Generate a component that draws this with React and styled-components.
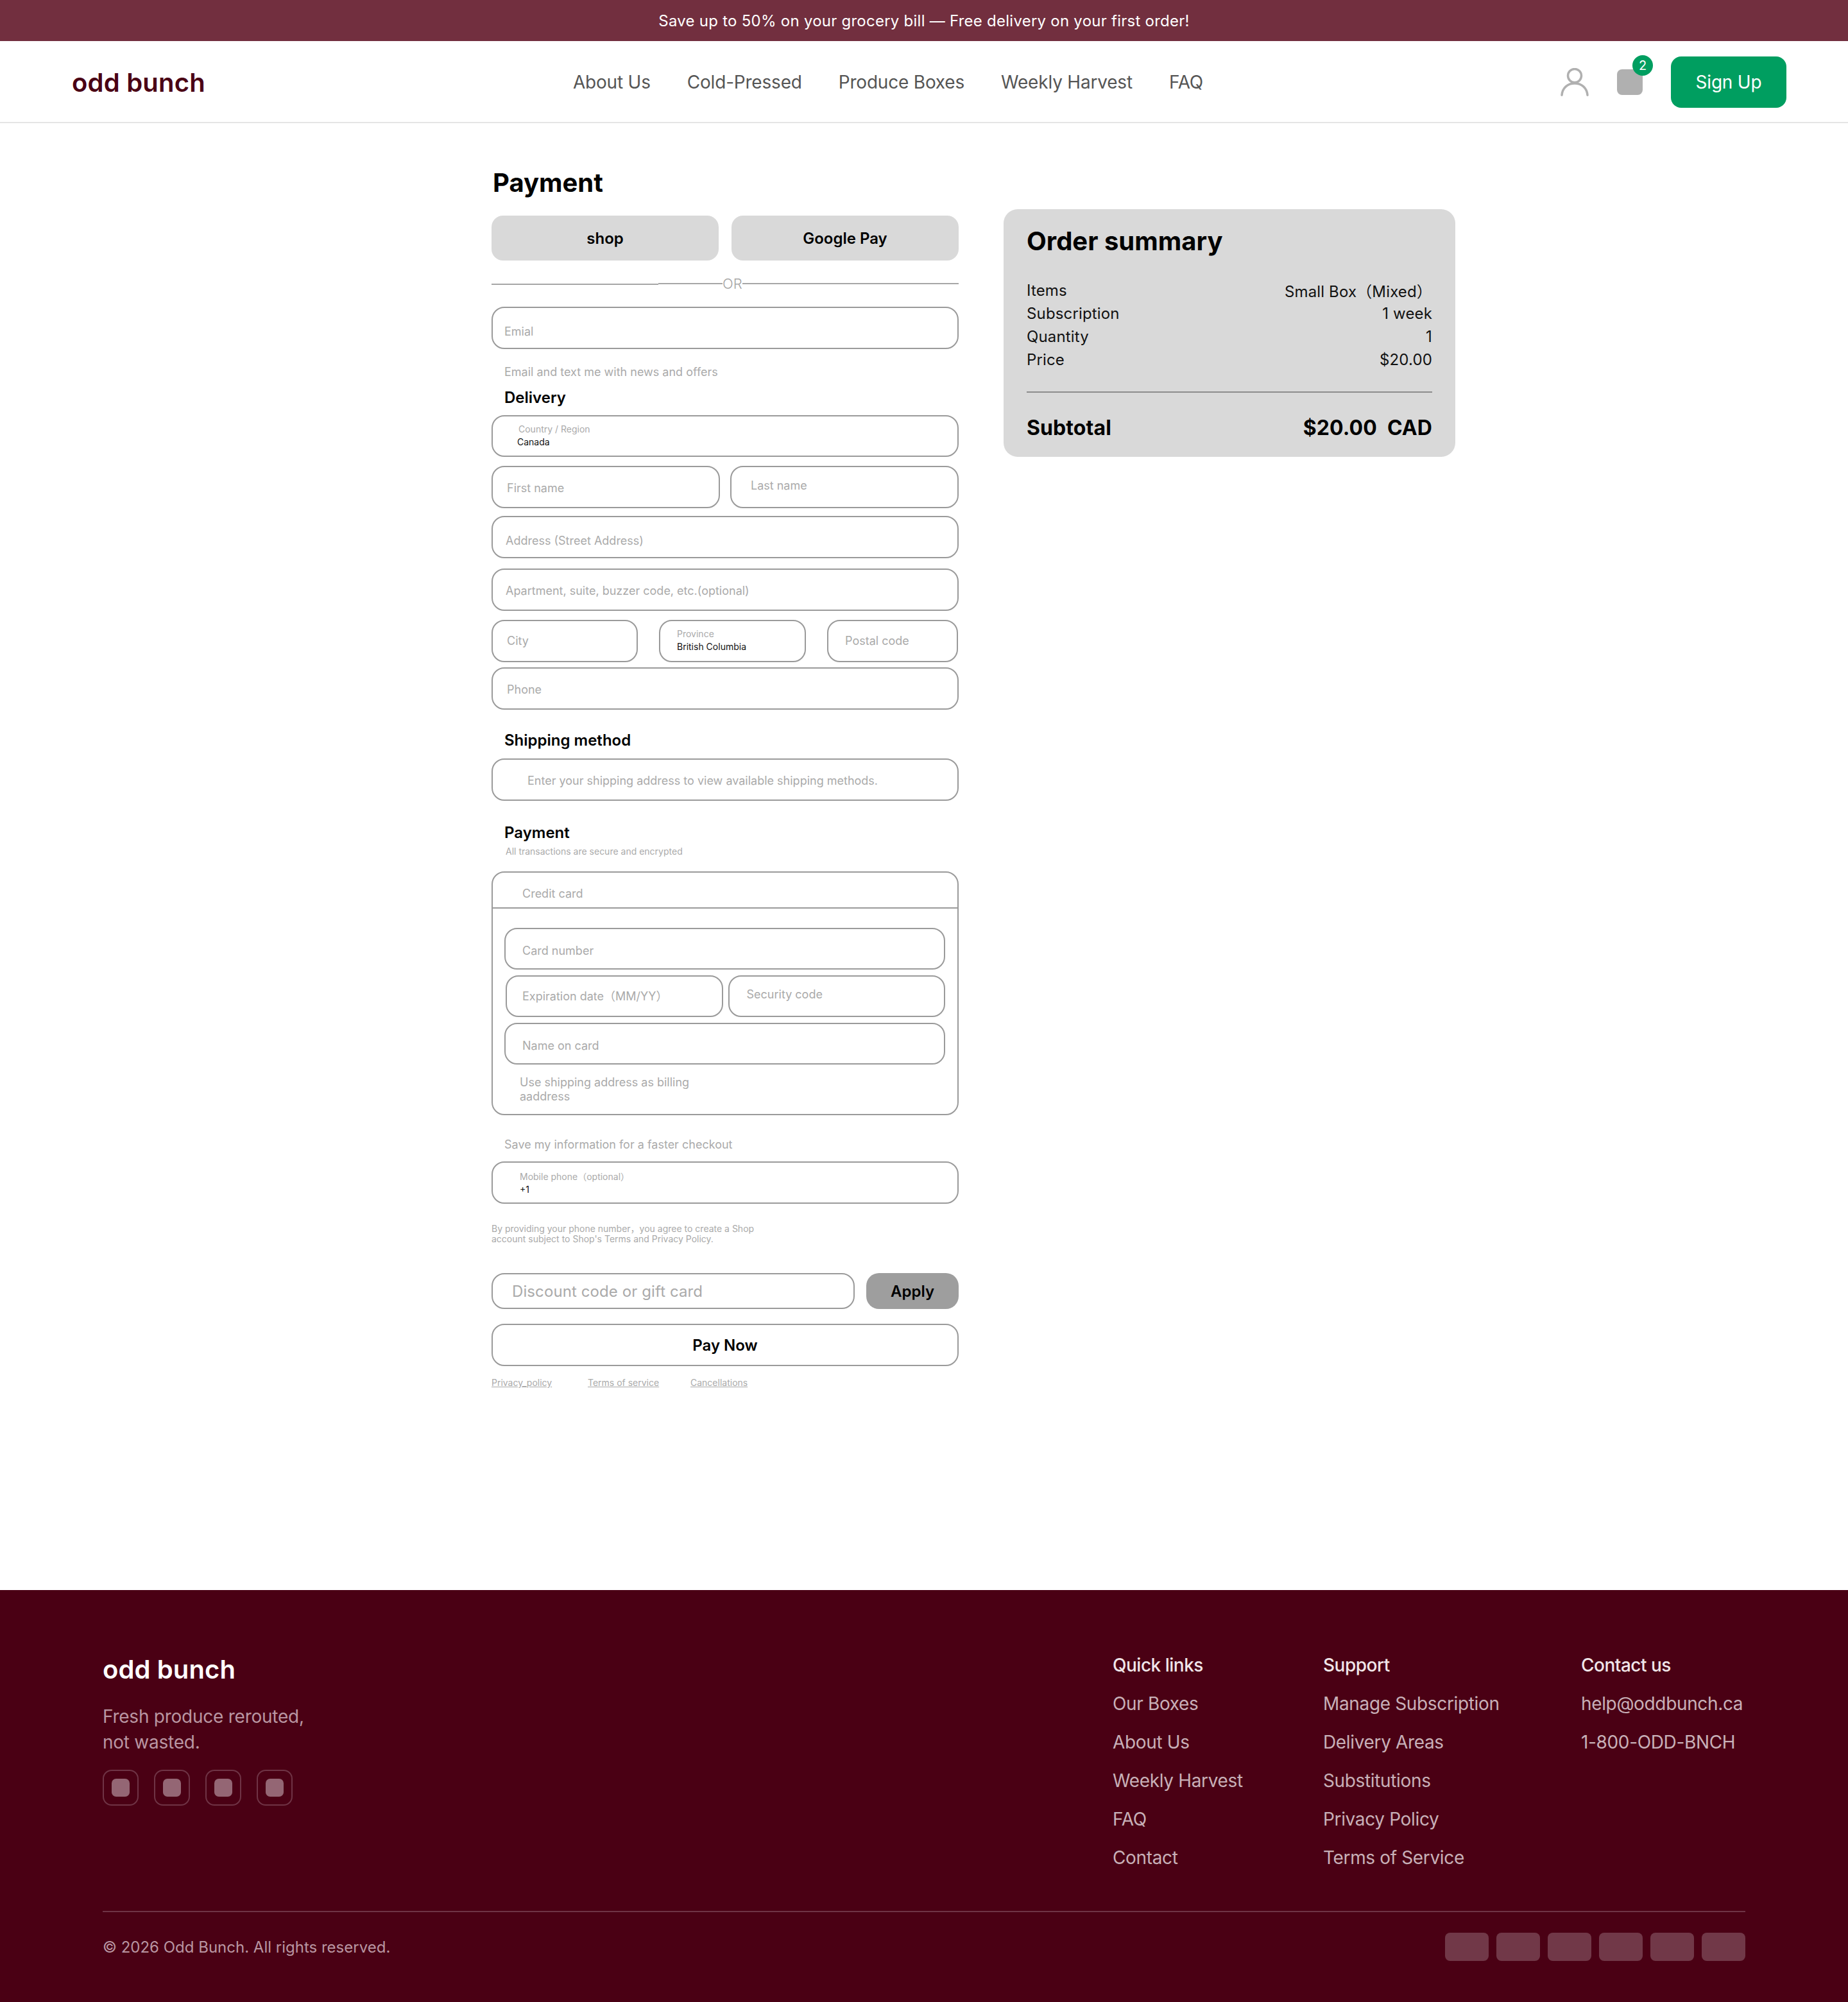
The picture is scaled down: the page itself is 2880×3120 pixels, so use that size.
import styled, { createGlobalStyle } from 'styled-components'

const GlobalStyle = createGlobalStyle`
    * {
        box-sizing: border-box;
    }

    body {
        margin: 0;
        background-color: #fff;
        font-family: Inter, "Noto Sans CJK SC", sans-serif;
    }
`

const navLinks = ['About Us', 'Cold-Pressed', 'Produce Boxes', 'Weekly Harvest', 'FAQ']

const summaryRows = [
    ['Items', 'Small Box（Mixed）'],
    ['Subscription', '1 week'],
    ['Quantity', '1'],
    ['Price', '$20.00'],
]

const footerColumns = [
    { title: 'Quick links', links: ['Our Boxes', 'About Us', 'Weekly Harvest', 'FAQ', 'Contact'] },
    {
        title: 'Support',
        links: ['Manage Subscription', 'Delivery Areas', 'Substitutions', 'Privacy Policy', 'Terms of Service'],
    },
    { title: 'Contact us', links: ['help@oddbunch.ca', '1-800-ODD-BNCH'] },
]

const App = () => {
    return (
        <>
            <GlobalStyle />
            <PromoBar>Save up to 50% on your grocery bill — Free delivery on your first order!</PromoBar>
            <Header>
                <Logo>odd bunch</Logo>
                <Nav>
                    {navLinks.map((link) => (
                        <NavLink key={link}>{link}</NavLink>
                    ))}
                </Nav>
                <HeaderActions>
                    <svg width="44" height="44" viewBox="0 0 44 44" fill="none" stroke="#b0b0b0" strokeWidth="3.5" strokeLinecap="round">
                        <circle cx="22" cy="12" r="10.5" />
                        <path d="M2 42.2C3 31 11 24 22 24C33 24 41 31 42 42.2" />
                    </svg>
                    <Cart>
                        <CartBadge>2</CartBadge>
                    </Cart>
                    <SignUp>Sign Up</SignUp>
                </HeaderActions>
            </Header>

            <Main>
                <FormColumn>
                    <PageTitle>Payment</PageTitle>
                    <ExpressRow>
                        <ExpressButton>shop</ExpressButton>
                        <ExpressButton>Google Pay</ExpressButton>
                    </ExpressRow>
                    <OrRow>
                        <OrLine $w={260} $low />
                        <OrLine $w={100} />
                        <OrText>OR</OrText>
                        <OrLine />
                    </OrRow>

                    <Field $mt={24} $pl={18} $pt={10}>Emial</Field>
                    <Helper $mt={25}>Email and text me with news and offers</Helper>
                    <SectionTitle $mt={14}>Delivery</SectionTitle>

                    <Field $mt={12} $pl={40} $pb={2} $stack $h={65}>
                        <MiniLabel>Country / Region</MiniLabel>
                        <MiniValue $ml={-2}>Canada</MiniValue>
                    </Field>
                    <FieldRow $mt={14} $gap={16}>
                        <Field $pl={22} $pt={2}>First name</Field>
                        <Field $pl={30} $pb={6}>Last name</Field>
                    </FieldRow>
                    <Field $mt={12} $pl={20} $pt={10}>Address (Street Address)</Field>
                    <Field $mt={16} $pl={20} $pt={2}>Apartment, suite, buzzer code, etc.(optional)</Field>
                    <CityRow>
                        <Field $pl={22} $pb={1}>City</Field>
                        <Field $pl={26} $pb={2} $stack>
                            <MiniLabel>Province</MiniLabel>
                            <MiniValue>British Columbia</MiniValue>
                        </Field>
                        <Field $pl={26} $pb={1}>Postal code</Field>
                    </CityRow>
                    <Field $mt={8} $pl={22} $pt={2}>Phone</Field>

                    <SectionTitle $mt={33}>Shipping method</SectionTitle>
                    <Field $mt={13} $pl={54} $pt={2}>Enter your shipping address to view available shipping methods.</Field>

                    <SectionTitle $mt={35}>Payment</SectionTitle>
                    <Fineprint $mt={6} $ml={22}>All transactions are secure and encrypted</Fineprint>

                    <CardBox>
                        <CardHeader>Credit card</CardHeader>
                        <CardBody>
                            <Field $pl={26} $pt={6} $h={65}>Card number</Field>
                            <FieldRow $mt={9} $gap={8} $ml={2}>
                                <Field $pl={24} $pb={3} $h={65}>Expiration date（MM/YY）</Field>
                                <Field $pl={27} $pb={7} $h={65}>Security code</Field>
                            </FieldRow>
                            <Field $mt={9} $pl={26} $pt={5} $h={65}>Name on card</Field>
                            <BillingNote>Use shipping address as billing aaddress</BillingNote>
                        </CardBody>
                    </CardBox>

                    <Helper $mt={35}>Save my information for a faster checkout</Helper>
                    <Field $mt={15} $pl={42} $pt={2} $stack>
                        <MiniLabel>Mobile phone（optional）</MiniLabel>
                        <MiniValue>+1</MiniValue>
                    </Field>
                    <Fineprint $mt={31} $wide>
                        By providing your phone number，you agree to create a Shop account subject to Shop's Terms and Privacy Policy.
                    </Fineprint>

                    <DiscountRow>
                        <DiscountInput>Discount code or gift card</DiscountInput>
                        <ApplyButton>Apply</ApplyButton>
                    </DiscountRow>
                    <PayButton>Pay Now</PayButton>
                    <PolicyLinks>
                        <PolicyLink $w={150}>Privacy_policy</PolicyLink>
                        <PolicyLink $w={160}>Terms of service</PolicyLink>
                        <PolicyLink>Cancellations</PolicyLink>
                    </PolicyLinks>
                </FormColumn>

                <Summary>
                    <SummaryTitle>Order summary</SummaryTitle>
                    <SummaryRows>
                        {summaryRows.map(([label, value]) => (
                            <SummaryRow key={label}>
                                <span>{label}</span>
                                <span>{value}</span>
                            </SummaryRow>
                        ))}
                    </SummaryRows>
                    <SubtotalRow>
                        <span>Subtotal</span>
                        <SubtotalValue>
                            <span>$20.00</span>
                            <span>CAD</span>
                        </SubtotalValue>
                    </SubtotalRow>
                </Summary>
            </Main>

            <Footer>
                <FooterTop>
                    <div>
                        <FooterLogo>odd bunch</FooterLogo>
                        <Tagline>
                            Fresh produce rerouted,
                            <br />
                            not wasted.
                        </Tagline>
                        <Socials>
                            {[0, 1, 2, 3].map((i) => (
                                <Social key={i}>
                                    <SocialDot />
                                </Social>
                            ))}
                        </Socials>
                    </div>
                    <FooterColumns>
                        {footerColumns.map((column) => (
                            <div key={column.title}>
                                <FooterHeading>{column.title}</FooterHeading>
                                {column.links.map((link) => (
                                    <FooterLink key={link}>{link}</FooterLink>
                                ))}
                            </div>
                        ))}
                    </FooterColumns>
                </FooterTop>
                <FooterBottom>
                    <Copyright>© 2026 Odd Bunch. All rights reserved.</Copyright>
                    <PayChips>
                        {[0, 1, 2, 3, 4, 5].map((i) => (
                            <PayChip key={i} />
                        ))}
                    </PayChips>
                </FooterBottom>
            </Footer>
        </>
    )
}

export default App

const PromoBar = styled.div`
    height: 64px;
    display: flex;
    align-items: center;
    justify-content: center;
    background-color: #722f3f;
    color: #fff;
    font-size: 24px;
    letter-spacing: 0.25px;
`

const Header = styled.header`
    height: 128px;
    padding: 2px 96px 0 112px;
    display: flex;
    align-items: center;
    justify-content: space-between;
    background-color: #fff;
    border-bottom: 2px solid #e5e5e5;
`

const Logo = styled.div`
    width: 224px;
    color: #4a0014;
    font-size: 40px;
    font-weight: 600;
    letter-spacing: 0.2px;
`

const Nav = styled.nav`
    display: flex;
    gap: 57px;
`

const NavLink = styled.a`
    color: #555;
    font-size: 28px;
    letter-spacing: -0.2px;
`

const HeaderActions = styled.div`
    display: flex;
    align-items: center;
    gap: 44px;
`

const Cart = styled.div`
    position: relative;
    width: 40px;
    height: 40px;
    border-radius: 8px;
    background-color: #b0b0b0;
`

const CartBadge = styled.span`
    position: absolute;
    top: -22px;
    right: -16px;
    width: 32px;
    height: 32px;
    border-radius: 50%;
    display: flex;
    align-items: center;
    justify-content: center;
    background-color: #009e60;
    color: #fff;
    font-size: 20px;
`

const SignUp = styled.button`
    width: 180px;
    height: 80px;
    border: 0;
    border-radius: 16px;
    background-color: #009e60;
    color: #fff;
    font-family: inherit;
    font-size: 28px;
    font-weight: 400;
    letter-spacing: -0.2px;
`

const Main = styled.main`
    min-height: 2286px;
    padding: 69px 0 0 766px;
    display: flex;
    align-items: flex-start;
    gap: 70px;
`

const FormColumn = styled.div`
    width: 728px;
    display: flex;
    flex-direction: column;
`

const PageTitle = styled.h1`
    margin: 0 0 27px 2px;
    color: #000;
    font-size: 40px;
    line-height: 48px;
    font-weight: 700;
`

const ExpressRow = styled.div`
    display: grid;
    grid-template-columns: 1fr 1fr;
    gap: 20px;
`

const ExpressButton = styled.button`
    height: 70px;
    border: 0;
    border-radius: 18px;
    background-color: #d9d9d9;
    color: #000;
    font-family: inherit;
    font-size: 24px;
    font-weight: 600;
`

const OrRow = styled.div`
    height: 24px;
    margin-top: 24px;
    display: flex;
    align-items: center;
`

const OrLine = styled.span`
    height: 2px;
    background-color: #a6a6a6;
    flex: ${({ $w }) => ($w ? `0 0 ${$w}px` : '1')};
    margin-top: ${({ $low }) => ($low ? '2px' : '0')};
`

const OrText = styled.span`
    color: #a6a6a6;
    font-size: 22px;
    font-weight: 300;
`

const Field = styled.div`
    flex: 1 0 auto;
    min-width: 0;
    height: ${({ $h }) => $h || 66}px;
    margin-top: ${({ $mt }) => $mt || 0}px;
    padding: ${({ $pt }) => $pt || 0}px 0 ${({ $pb }) => $pb || 0}px ${({ $pl }) => $pl || 0}px;
    display: flex;
    flex-direction: ${({ $stack }) => ($stack ? 'column' : 'row')};
    align-items: ${({ $stack }) => ($stack ? 'flex-start' : 'center')};
    justify-content: ${({ $stack }) => ($stack ? 'center' : 'flex-start')};
    background-color: #fff;
    border: 2px solid #9a9a9a;
    border-radius: 20px;
    color: #aaa;
    font-size: 18px;
`

const MiniLabel = styled.div`
    color: #aaa;
    font-size: 14px;
    line-height: 20px;
`

const MiniValue = styled.div`
    margin-left: ${({ $ml }) => $ml || 0}px;
    color: #111;
    font-size: 14px;
    line-height: 20px;
`

const FieldRow = styled.div`
    margin-top: ${({ $mt }) => $mt || 0}px;
    margin-left: ${({ $ml }) => $ml || 0}px;
    display: grid;
    grid-template-columns: 1fr 1fr;
    gap: ${({ $gap }) => $gap}px;
`

const CityRow = styled.div`
    margin-top: 14px;
    display: grid;
    grid-template-columns: 228px 229px 204px;
    column-gap: 33px;
`

const Helper = styled.div`
    margin-top: ${({ $mt }) => $mt || 0}px;
    margin-left: 20px;
    color: #aaa;
    font-size: 18px;
    line-height: 22px;
`

const SectionTitle = styled.h2`
    margin: ${({ $mt }) => $mt || 0}px 0 0 20px;
    color: #000;
    font-size: 24px;
    line-height: 30px;
    font-weight: 600;
`

const Fineprint = styled.div`
    margin-top: ${({ $mt }) => $mt || 0}px;
    margin-left: ${({ $ml }) => $ml || 0}px;
    max-width: ${({ $wide }) => ($wide ? '420px' : 'none')};
    color: #aaa;
    font-size: 14px;
    line-height: 16px;
`

const CardBox = styled.div`
    height: 380px;
    margin-top: 23px;
    border: 2px solid #9a9a9a;
    border-radius: 20px;
`

const CardHeader = styled.div`
    height: 56px;
    padding: 10px 0 0 46px;
    display: flex;
    align-items: center;
    border-bottom: 2px solid #9a9a9a;
    color: #aaa;
    font-size: 18px;
`

const CardBody = styled.div`
    padding: 30px 19px 0 18px;
    display: flex;
    flex-direction: column;
`

const BillingNote = styled.div`
    width: 290px;
    margin: 17px 0 0 24px;
    color: #aaa;
    font-size: 18px;
    line-height: 22px;
`

const DiscountRow = styled.div`
    margin-top: 45px;
    display: flex;
    gap: 18px;
`

const DiscountInput = styled.div`
    flex: 1;
    height: 56px;
    padding-left: 30px;
    display: flex;
    align-items: center;
    border: 2px solid #9a9a9a;
    border-radius: 20px;
    color: #aaa;
    font-size: 24px;
    letter-spacing: 0.1px;
`

const ApplyButton = styled.button`
    width: 144px;
    height: 56px;
    border: 0;
    border-radius: 20px;
    background-color: #9e9e9e;
    color: #000;
    font-family: inherit;
    font-size: 24px;
    font-weight: 600;
`

const PayButton = styled.button`
    height: 66px;
    margin-top: 23px;
    border: 2px solid #9a9a9a;
    border-radius: 20px;
    background-color: #fff;
    color: #000;
    font-family: inherit;
    font-size: 24px;
    font-weight: 600;
`

const PolicyLinks = styled.div`
    margin-top: 17px;
    display: flex;
`

const PolicyLink = styled.a`
    flex: ${({ $w }) => ($w ? `0 0 ${$w}px` : 'none')};
    color: #aaa;
    font-size: 14px;
    line-height: 18px;
    text-decoration: underline;
`

const Summary = styled.aside`
    width: 704px;
    height: 386px;
    margin-top: 65px;
    padding: 26px 36px 0;
    background-color: #d9d9d9;
    border-radius: 22px;
`

const SummaryTitle = styled.h2`
    margin: 0;
    color: #000;
    font-size: 40px;
    line-height: 48px;
    font-weight: 700;
`

const SummaryRows = styled.div`
    margin-top: 34px;
    padding-bottom: 32px;
    display: flex;
    flex-direction: column;
    border-bottom: 2px solid #8c8c8c;
`

const SummaryRow = styled.div`
    height: 36px;
    display: flex;
    align-items: center;
    justify-content: space-between;
    color: #111;
    font-size: 24px;
    letter-spacing: 0.15px;
`

const SubtotalRow = styled.div`
    margin-top: 36px;
    display: flex;
    justify-content: space-between;
    color: #000;
    font-size: 32px;
    line-height: 38px;
    font-weight: 700;
    letter-spacing: 0.1px;
`

const SubtotalValue = styled.div`
    display: flex;
    gap: 16px;
`

const Footer = styled.footer`
    height: 642px;
    padding: 98px 160px 0;
    background-color: #4a0014;
`

const FooterTop = styled.div`
    height: 402px;
    display: flex;
    justify-content: space-between;
`

const FooterLogo = styled.div`
    margin-top: -2px;
    color: #fff;
    font-size: 40px;
    line-height: 56px;
    font-weight: 600;
    letter-spacing: 0.1px;
`

const Tagline = styled.p`
    margin: 25px 0 0;
    color: #b996a2;
    font-size: 28px;
    line-height: 40px;
    letter-spacing: -0.25px;
`

const Socials = styled.div`
    margin-top: 23px;
    display: flex;
    gap: 24px;
`

const Social = styled.div`
    width: 56px;
    height: 56px;
    display: flex;
    align-items: center;
    justify-content: center;
    border: 2px solid #6f3345;
    border-radius: 14px;
`

const SocialDot = styled.span`
    width: 28px;
    height: 28px;
    border-radius: 7px;
    background-color: #946674;
`

const FooterColumns = styled.div`
    display: grid;
    grid-template-columns: 200px 274px 256px;
    gap: 128px;
`

const FooterHeading = styled.div`
    color: #f0e6e9;
    font-size: 28px;
    line-height: 38px;
    font-weight: 500;
    letter-spacing: -0.5px;
`

const FooterLink = styled.a`
    display: block;
    margin-top: 22px;
    color: #c8b0b8;
    font-size: 28px;
    line-height: 38px;
    white-space: nowrap;
    letter-spacing: -0.35px;
`

const FooterBottom = styled.div`
    padding-top: 32px;
    display: flex;
    align-items: center;
    justify-content: space-between;
    border-top: 2px solid #6f3345;
`

const Copyright = styled.div`
    color: #b996a2;
    font-size: 24px;
`

const PayChips = styled.div`
    display: flex;
    gap: 12px;
`

const PayChip = styled.span`
    width: 68px;
    height: 44px;
    border-radius: 8px;
    background-color: #713848;
`
